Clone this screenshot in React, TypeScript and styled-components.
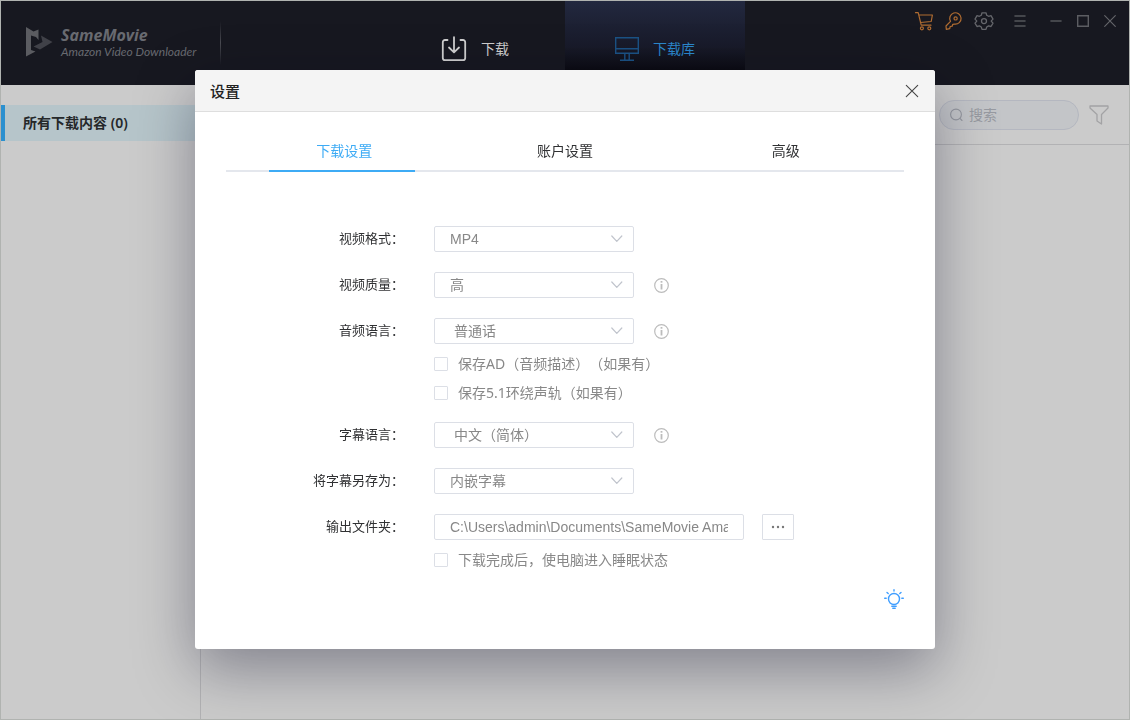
import React from "react";
import styled, { createGlobalStyle } from "styled-components";

const GlobalStyle = createGlobalStyle`
  * { box-sizing: border-box; }
  body {
    margin: 0;
    font-family: "Noto Sans", "Noto Sans CJK SC", sans-serif;
    font-size: 14px;
    text-spacing-trim: space-all;
  }
  button, input, select { font: inherit; }
  button { padding: 0; border: 0; background: none; color: inherit; cursor: pointer; }
`;

const Window = styled.div`
  display: flex;
  flex-direction: column;
  min-height: 100vh;
  border: 1px solid #b0b3b0;
  background: #cbcbcb;
`;

const Header = styled.header`
  display: grid;
  grid-template-columns: 1fr auto 1fr;
  height: 84px;
  background: #171820;
`;

const Brand = styled.div`
  display: flex;
  align-items: flex-start;
  padding: 20px 0 0 24px;
`;

const LogoMark = styled.svg`
  margin: 5px 8px 0 0;
  flex: none;
`;

const BrandText = styled.div`
  width: 159px;
  padding-top: 4px;
  color: #686a70;
  font-style: italic;
  white-space: nowrap;
`;

const BrandName = styled.div`
  font-family: "Open Sans", "Noto Sans", sans-serif;
  font-size: 16px;
  font-weight: 700;
  line-height: 20px;
`;

const BrandSub = styled.div`
  font-family: Lato, "Open Sans", sans-serif;
  font-size: 12px;
  line-height: 14px;
`;

const BrandDivider = styled.div`
  width: 1px;
  height: 44px;
  background: linear-gradient(transparent, #4a4b52 50%, transparent);
`;

const MainNav = styled.nav`
  display: flex;
`;

const NavTab = styled.button<{ $active?: boolean }>`
  display: flex;
  align-items: center;
  justify-content: center;
  gap: 14px;
  width: 180px;
  padding-top: 12px;
  color: ${(p) => (p.$active ? "#2b88cd" : "#cfcfcf")};
  background: ${(p) => (p.$active ? "linear-gradient(#22283f, #181a29 55%, #0b0b12 82%)" : "none")};
`;

const NavText = styled.span`
  padding-bottom: 2px;
`;

const WindowTools = styled.div`
  display: flex;
  justify-content: flex-end;
  align-items: center;
  height: 40px;
  padding-right: 4px;
`;

const ToolButton = styled.button<{ $width: number; $color?: string }>`
  display: flex;
  align-items: center;
  justify-content: center;
  width: ${(p) => p.$width}px;
  height: 30px;
  color: ${(p) => p.$color ?? "#65666b"};
`;

const Body = styled.div`
  display: flex;
  flex: 1;
`;

const Sidebar = styled.aside`
  width: 200px;
  padding-top: 20px;
  border-right: 1px solid #b2b2b4;
`;

const SidebarItem = styled.a`
  display: block;
  height: 36px;
  padding-left: 18px;
  border-left: 4px solid #2b90cf;
  background: #b6c5ca;
  color: #25282a;
  font-weight: 600;
  line-height: 36px;
  text-decoration: none;
`;

const Content = styled.main`
  flex: 1;
`;

const Toolbar = styled.div`
  display: flex;
  align-items: center;
  justify-content: flex-end;
  gap: 10px;
  height: 60px;
  padding-right: 20px;
  border-bottom: 1px solid #b2b2b4;
`;

const SearchBox = styled.label`
  display: flex;
  align-items: center;
  gap: 6px;
  width: 140px;
  height: 30px;
  padding: 0 10px;
  border: 1px solid #b4b7c0;
  border-radius: 15px;
  background: #c3c5c8;
  color: #94979f;

  svg { flex: none; }

  input {
    width: 100%;
    min-width: 0;
    padding: 0;
    border: 0;
    outline: 0;
    background: none;
  }
  input::placeholder { color: #979aa1; opacity: 1; }
`;

const FilterButton = styled.button`
  display: flex;
  color: #a3a3a5;
`;

const Overlay = styled.div`
  position: fixed;
  inset: 0;
  display: flex;
  align-items: flex-start;
  justify-content: center;
  padding-top: 70px;
  overflow: auto;
`;

const Dialog = styled.section`
  width: 740px;
  max-width: 100%;
  border-radius: 3px;
  background: #fff;
  box-shadow: 0 20px 60px rgba(0, 0, 30, 0.36);
  overflow: hidden;
`;

const DialogHeader = styled.div`
  display: flex;
  align-items: center;
  justify-content: space-between;
  height: 42px;
  padding: 0 16px 0 15px;
  border-bottom: 1px solid #dedede;
  background: #f4f4f4;
  color: #222;
`;

const DialogTitle = styled.h1`
  margin: 0;
  font-size: 15px;
  font-weight: 500;
`;

const CloseButton = styled.button`
  display: flex;
  color: #444;
`;

const DialogBody = styled.div`
  padding: 20px 31px 40px;
`;

const TabList = styled.div`
  display: flex;
  padding: 0 8px;
  border-bottom: 2px solid #e4e7ed;
`;

const Tab = styled.button<{ $active?: boolean }>`
  position: relative;
  flex: 1;
  height: 38px;
  padding-bottom: 2px;
  color: ${(p) => (p.$active ? "#3dabf5" : "#303133")};

  &::after {
    content: "";
    display: ${(p) => (p.$active ? "block" : "none")};
    position: absolute;
    left: 35px;
    bottom: -2px;
    width: 146px;
    height: 2px;
    background: #3dabf5;
  }
`;

const Form = styled.form`
  display: flex;
  flex-direction: column;
  gap: 20px;
  padding-top: 54px;
`;

const Field = styled.div`
  display: grid;
  grid-template-columns: 178px 1fr;
  column-gap: 30px;
`;

const FieldLabel = styled.label`
  height: 26px;
  color: #303133;
  font-size: 13px;
  line-height: 24px;
  text-align: right;
`;

const Controls = styled.div<{ $gap?: number }>`
  display: flex;
  align-items: center;
  gap: ${(p) => p.$gap ?? 20}px;
`;

const SelectWrap = styled.div`
  position: relative;
  width: 200px;

  svg {
    position: absolute;
    top: 9px;
    right: 11px;
    pointer-events: none;
    color: #c0c4cc;
  }
`;

const Select = styled.select`
  display: block;
  appearance: none;
  width: 100%;
  height: 26px;
  padding: 0 30px 0 15px;
  border: 1px solid #dcdfe6;
  border-radius: 2px;
  outline: 0;
  background: #fff;
  color: #888;
  font-family: "Liberation Sans", "Noto Sans CJK SC", sans-serif;
`;

const PathInput = styled.input`
  width: 310px;
  height: 26px;
  padding: 0 15px;
  border: 1px solid #dcdfe6;
  border-radius: 2px;
  outline: 0;
  background: #fff;
  color: #888;
  font-family: "Liberation Sans", "Noto Sans CJK SC", sans-serif;
`;

const BrowseButton = styled.button`
  display: flex;
  align-items: center;
  justify-content: center;
  width: 32px;
  height: 26px;
  border: 1px solid #dcdfe6;
  border-radius: 1px;
  color: #777;
`;

const InfoButton = styled.button`
  display: flex;
  color: #bcbcbc;
`;

const CheckList = styled.div`
  grid-column: 2;
  margin: 5px 0 -5px;
`;

const CheckLabel = styled.label`
  display: flex;
  align-items: center;
  gap: 10px;
  height: 29px;
  color: #888;

  input {
    appearance: none;
    width: 14px;
    height: 14px;
    margin: 0;
    border: 1px solid #dcdfe6;
    border-radius: 1px;
    background: #fff;
  }
  input:checked { background: #3dabf5; }

  span { padding-bottom: 2px; }
`;

const DialogFooter = styled.div`
  display: flex;
  justify-content: flex-end;
  padding-top: 20px;
`;

const TipButton = styled.button`
  display: flex;
  color: #409eff;
`;

function Icon({ w, h, sw = 1, children }: { w: number; h: number; sw?: number; children: React.ReactNode }) {
  return (
    <svg width={w} height={h} viewBox={`0 0 ${w} ${h}`} fill="none" stroke="currentColor" strokeWidth={sw} strokeLinecap="round" strokeLinejoin="round" aria-hidden="true">
      {children}
    </svg>
  );
}

function Info() {
  return (
    <InfoButton type="button" aria-label="info">
      <Icon w={15} h={15} sw={1.2}>
        <circle cx="7.5" cy="7.5" r="6.8" />
        <path d="M7.5 6v5.500" strokeWidth="1.8" strokeLinecap="butt" />
        <path d="M7.5 3v1.700" strokeWidth="1.8" strokeLinecap="butt" />
      </Icon>
    </InfoButton>
  );
}

function SelectField({ id, label, value, info, children }: { id: string; label: string; value: string; info?: boolean; children?: React.ReactNode }) {
  return (
    <Field>
      <FieldLabel htmlFor={id}>{label}</FieldLabel>
      <Controls>
        <SelectWrap>
          <Select id={id}>
            <option>{value}</option>
          </Select>
          <Icon w={12} h={8} sw={1.2}><path d="M.8 1L5.800 6.400L10.800 1" /></Icon>
        </SelectWrap>
        {info && <Info />}
      </Controls>
      {children}
    </Field>
  );
}

function Check({ label }: { label: string }) {
  return (
    <CheckLabel>
      <input type="checkbox" />
      <span>{label}</span>
    </CheckLabel>
  );
}

export default function App() {
  return (
    <>
      <GlobalStyle />
      <Window>
        <Header>
          <Brand>
            <LogoMark width="28" height="32" viewBox="0 0 28 32" aria-hidden="true">
              <path d="M1 1L8.500 5.500L13.500 3.500V14L11 11L6 9.500V24L10.500 25.500L1 30.500Z" fill="#5b5c61" />
              <path d="M16 9.500L27.500 16L15 23.500L8.500 20.500L17.500 16Z" fill="#404148" />
            </LogoMark>
            <BrandText>
              <BrandName>SameMovie</BrandName>
              <BrandSub>Amazon Video Downloader</BrandSub>
            </BrandText>
            <BrandDivider />
          </Brand>
          <MainNav>
            <NavTab>
              <Icon w={26} h={26} sw={1.8}>
                <path d="M6.500 4H4a2.200 2.200 0 0 0-2.200 2.200V22A2.200 2.200 0 0 0 4 24.200H22A2.200 2.200 0 0 0 24.200 22V6.200A2.200 2.200 0 0 0 22 4H19.500M13 1.200V16M8 11.500L13 16.300L18 11.500" />
              </Icon>
              <NavText>下载</NavText>
            </NavTab>
            <NavTab $active>
              <svg width="24" height="24" viewBox="0 0 24 24" fill="none" stroke="#1b5285" strokeWidth="1.4" aria-hidden="true">
                <path d="M.7.7H23.300V16.300H.7ZM.7 11.800H23.300M9.800 16.300V23M14.200 16.300V23M5 23.200H19" />
              </svg>
              <NavText>下载库</NavText>
            </NavTab>
          </MainNav>
          <WindowTools>
            <ToolButton $width={30} $color="#b06c31" aria-label="cart">
              <Icon w={20} h={20} sw={1.2}>
                <path d="M1.500 1.700H4.200L7.200 14.200H17M4.800 4H18.400L17.200 10.500L6.400 11.500" />
                <circle cx="7.900" cy="17.300" r="1.500" /><circle cx="15.300" cy="17.300" r="1.500" />
              </Icon>
            </ToolButton>
            <ToolButton $width={30} $color="#b06c31" aria-label="key">
              <Icon w={20} h={20} sw={1.2}>
                <path d="M6.500 10.400A5.700 5.700 0 1 1 10.500 13.100L8.800 13.300L8.200 15.200L6.200 15.500L5.700 17.600L2.300 18.300L2 15Z" />
                <circle cx="11.600" cy="7.400" r="1.600" />
              </Icon>
            </ToolButton>
            <ToolButton $width={30} aria-label="settings">
              <Icon w={20} h={20} sw={1.3}>
                <path d="M8 1.800H12L12.700 4.200L14.600 5.300L17 4.700L19 8.100L17.300 9.900V10.300L19 12.100L17 15.500L14.600 14.900L12.700 16L12 18.400H8L7.300 16L5.400 14.900L3 15.500L1 12.100L2.700 10.300V9.900L1 8.100L3 4.700L5.400 5.300L7.300 4.200Z" />
                <circle cx="10" cy="10.100" r="2.500" />
              </Icon>
            </ToolButton>
            <ToolButton $width={42} $color="#54555a" aria-label="menu">
              <Icon w={12} h={12} sw={1.6}><path d="M1 1H11M1 6H11M1 11H11" /></Icon>
            </ToolButton>
            <ToolButton $width={30} $color="#54555a" aria-label="minimize">
              <Icon w={12} h={12} sw={1.6}><path d="M1 6H11" /></Icon>
            </ToolButton>
            <ToolButton $width={24} $color="#5c5d62" aria-label="maximize">
              <Icon w={12} h={12} sw={1.4}><path d="M.7.7H11.300V11.300H.7Z" strokeLinejoin="miter" /></Icon>
            </ToolButton>
            <ToolButton $width={30} aria-label="close window">
              <Icon w={12} h={12} sw={1.1}><path d="M.7.7L11.300 11.300M11.300.7L.7 11.300" /></Icon>
            </ToolButton>
          </WindowTools>
        </Header>
        <Body>
          <Sidebar>
            <SidebarItem href="#all">所有下载内容 (0)</SidebarItem>
          </Sidebar>
          <Content>
            <Toolbar>
              <SearchBox>
                <Icon w={13} h={14} sw={1.1}>
                  <circle cx="6" cy="6.500" r="5.400" /><path d="M10.200 10.700L12 12.500" />
                </Icon>
                <input type="search" placeholder="搜索" aria-label="搜索" />
              </SearchBox>
              <FilterButton aria-label="filter">
                <Icon w={20} h={20} sw={1.3}>
                  <path d="M1 1H19V3L12.500 9.500V19L8 16V9.500L1 3Z" />
                </Icon>
              </FilterButton>
            </Toolbar>
          </Content>
        </Body>
      </Window>
      <Overlay>
        <Dialog role="dialog" aria-labelledby="dialog-title">
          <DialogHeader>
            <DialogTitle id="dialog-title">设置</DialogTitle>
            <CloseButton aria-label="close">
              <Icon w={14} h={14} sw={1.1}><path d="M1.300 1.300L12.700 12.700M12.700 1.300L1.300 12.700" /></Icon>
            </CloseButton>
          </DialogHeader>
          <DialogBody>
            <TabList role="tablist">
              <Tab role="tab" aria-selected="true" $active>下载设置</Tab>
              <Tab role="tab" aria-selected="false">账户设置</Tab>
              <Tab role="tab" aria-selected="false">高级</Tab>
            </TabList>
            <Form>
              <SelectField id="format" label="视频格式：" value="MP4" />
              <SelectField id="quality" label="视频质量：" value="高" info />
              <SelectField id="audio" label="音频语言：" value={"\u00a0普通话"} info>
                <CheckList>
                  <Check label="保存AD（音频描述）（如果有）" />
                  <Check label="保存5.1环绕声轨（如果有）" />
                </CheckList>
              </SelectField>
              <SelectField id="subtitle" label="字幕语言：" value={"\u00a0中文（简体）"} info />
              <SelectField id="saveas" label="将字幕另存为：" value="内嵌字幕" />
              <Field>
                <FieldLabel htmlFor="folder">输出文件夹：</FieldLabel>
                <Controls $gap={18}>
                  <PathInput id="folder" readOnly value="C:\Users\admin\Documents\SameMovie Amazon Video Downloader" />
                  <BrowseButton type="button" aria-label="browse">
                    <svg width="14" height="4" viewBox="0 0 14 4" fill="currentColor" aria-hidden="true">
                      <circle cx="2" cy="2" r="1.200" /><circle cx="7" cy="2" r="1.200" /><circle cx="12" cy="2" r="1.200" />
                    </svg>
                  </BrowseButton>
                </Controls>
                <CheckList>
                  <Check label="下载完成后，使电脑进入睡眠状态" />
                </CheckList>
              </Field>
            </Form>
            <DialogFooter>
              <TipButton aria-label="tips">
                <Icon w={20} h={20} sw={1.4}>
                  <circle cx="10" cy="10" r="5.500" />
                  <path d="M10 .7V2M.7 9.300H2.200M17.800 9.300H19.300M3 3.400L4.200 4.500M17 3.400L15.800 4.500M7.800 17.200H12.200M8.800 19.200H11.200" />
                </Icon>
              </TipButton>
            </DialogFooter>
          </DialogBody>
        </Dialog>
      </Overlay>
    </>
  );
}
